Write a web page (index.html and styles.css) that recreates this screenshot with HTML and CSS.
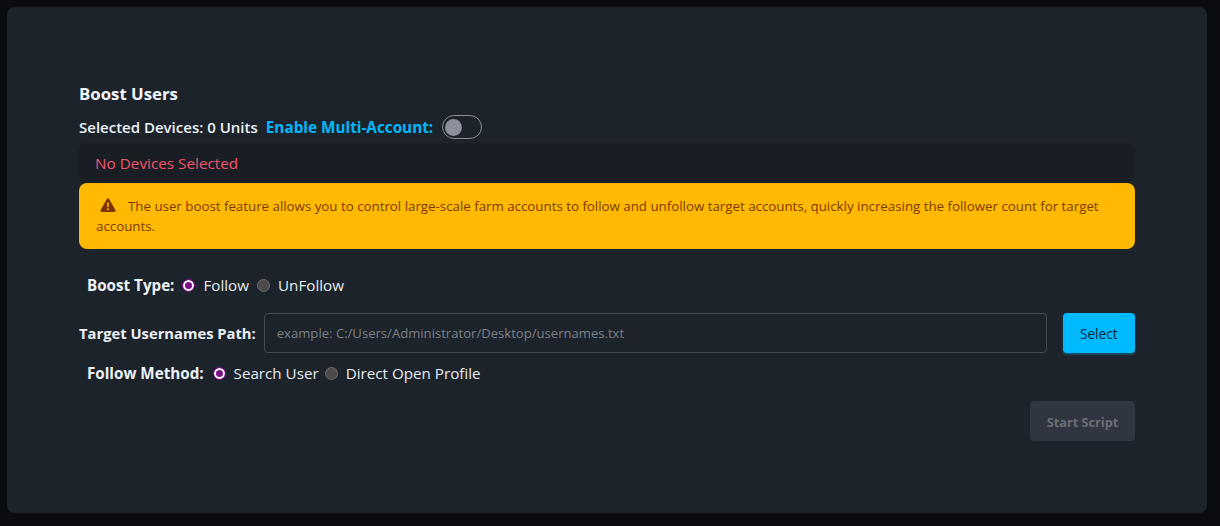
FILE: index.html
```html
<!DOCTYPE html>
<html lang="en">
<head>
<meta charset="utf-8">
<title>Boost Users</title>
<link rel="stylesheet" href="styles.css">
</head>
<body>
<main class="card">
  <h1 class="title">Boost Users</h1>
  <div class="devices-row">
    <span class="devices-label">Selected Devices: 0 Units</span>
    <span class="multi-label">Enable Multi-Account:</span>
    <span class="toggle"><span class="knob"></span></span>
  </div>
  <div class="device-box">No Devices Selected</div>
  <div class="alert">
    <svg class="alert-icon" viewBox="0 0 16 16" aria-hidden="true"><path fill-rule="evenodd" d="M8 1.2c.5 0 .9.3 1.1.7l6.3 11.2c.5.9-.1 1.9-1.1 1.9H1.700c-1 0-1.600-1-1.100-1.900L6.900 1.900C7.100 1.500 7.500 1.200 8 1.200zM7.100 5.500l.2 4.800h1.400l.2-4.800zM8 11.200a1 1 0 1 0 0 2 1 1 0 0 0 0-2z"/></svg>The user boost feature allows you to control large-scale farm accounts to follow and unfollow target accounts, quickly increasing the follower count for target accounts.
  </div>
  <div class="radio-row boost-row">
    <span class="field-label">Boost Type:</span>
    <span class="radio checked"></span><span class="radio-text">Follow</span>
    <span class="radio"></span><span class="radio-text">UnFollow</span>
  </div>
  <div class="path-row">
    <span class="path-label">Target Usernames Path:</span>
    <div class="path-input">example: C:/Users/Administrator/Desktop/usernames.txt</div>
    <button class="select-btn" type="button">Select</button>
  </div>
  <div class="radio-row method-row">
    <span class="field-label">Follow Method:</span>
    <span class="radio checked"></span><span class="radio-text">Search User</span>
    <span class="radio"></span><span class="radio-text">Direct Open Profile</span>
  </div>
  <div class="actions">
    <button class="start-btn" type="button" disabled>Start Script</button>
  </div>
</main>
</body>
</html>
```
FILE: styles.css
```css
* { box-sizing: border-box; }
html, body { height: 100%; }
body {
  margin: 0;
  padding: 7px 13px 13px 7px;
  background: #0b0c0f;
  font-family: "Open Sans", "Noto Sans", sans-serif;
  color: #ecf2f8;
  overflow: hidden;
}
.card {
  height: 506px;
  padding: 75px 72px 0;
  background: #1d232a;
  border-radius: 8px;
}
.title {
  margin: 0;
  height: 24px;
  font-size: 16.8px;
  line-height: 24px;
  font-weight: 700;
  color: #f3f7fb;
}
.devices-row {
  display: flex;
  align-items: center;
  height: 24px;
  margin-top: 9px;
  font-size: 15px;
  font-weight: 600;
}
.multi-label { margin-left: 8px; font-size: 15.3px; color: #00b8fd; font-weight: 700; }
.toggle {
  display: flex;
  align-items: center;
  width: 40px;
  height: 24px;
  margin-left: 9px;
  padding-left: 2px;
  border: 1px solid #8a8f96;
  border-radius: 12px;
}
.knob { width: 17px; height: 17px; border-radius: 50%; background: #8b909b; }
.device-box {
  height: 40px;
  margin-top: 4px;
  padding: 0 16px;
  background: #191e24;
  border-radius: 8px;
  font-size: 15.3px;
  line-height: 40px;
  color: #f2546e;
}
.alert {
  height: 66px;
  padding: 13px 17px;
  background: #ffb900;
  border-radius: 8px;
  font-size: 13.3px;
  line-height: 20px;
  color: #7c3b05;
}
.alert-icon {
  width: 16px;
  height: 16px;
  margin: 0 12px 0 4px;
  vertical-align: -2px;
  fill: #7c3300;
}
.radio-row {
  display: flex;
  align-items: center;
  height: 24px;
  padding-left: 8px;
  font-size: 15.2px;
}
.boost-row { margin-top: 24px; }
.method-row { margin-top: 8px; }
.field-label { font-weight: 700; font-size: 15.2px; margin-right: 8px; }
.method-row .field-label { margin-right: 9px; }
.radio {
  width: 13px;
  height: 13px;
  margin-right: 8px;
  border: 1px solid #6c6c6c;
  border-radius: 50%;
  background: #4a4a4a;
}
.radio.checked {
  border-color: #8a0a96;
  background: #7b0f86;
  box-shadow: inset 0 0 0 2px #ffffff;
}
.radio-text { margin-right: 8px; color: #e6ebf0; }
.method-row .radio-text { margin-right: 6px; }
.path-row { display: flex; align-items: center; height: 40px; margin-top: 16px; }
.path-label { font-size: 14.75px; font-weight: 700; margin-right: 8px; white-space: nowrap; }
.path-input {
  width: 783px;
  height: 40px;
  padding: 0 12px;
  border: 1px solid #454b53;
  border-radius: 4px;
  font-size: 13.1px;
  line-height: 39px;
  color: #7b8087;
}
.select-btn {
  width: 72px;
  height: 40px;
  margin-left: 16px;
  border: 0;
  border-radius: 4px;
  background: #00baff;
  box-shadow: 0 2px 2px rgba(0, 186, 255, .3);
  font: inherit;
  font-size: 13.7px;
  color: #04283c;
}
.actions { display: flex; justify-content: flex-end; margin-top: 16px; }
.start-btn {
  width: 105px;
  height: 40px;
  padding: 2px 0 0;
  border: 0;
  border-radius: 4px;
  background: #30363f;
  font: inherit;
  font-size: 12.7px;
  font-weight: 700;
  color: #6a6f77;
}
```
